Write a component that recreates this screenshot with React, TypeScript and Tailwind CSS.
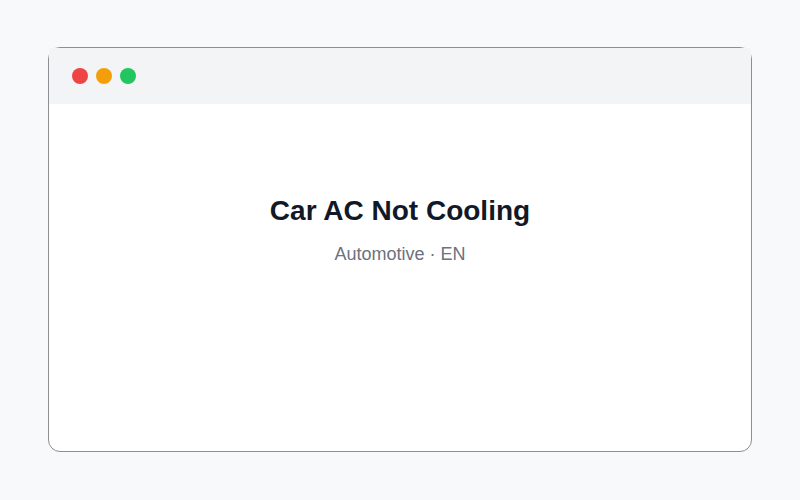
export default function App() {
    return (
        <div className="min-h-screen w-full bg-[#f8f9fb] px-12 pt-[47px] font-['Liberation_Sans',Arial,sans-serif]">
            <div className="flex h-[405px] flex-col rounded-xl border border-[#8e8e93] bg-white">
                <div className="flex h-14 items-center gap-2 bg-[#f3f4f6] px-[23px]">
                    <span className="h-4 w-4 rounded-full bg-[#ef4444]" />
                    <span className="h-4 w-4 rounded-full bg-[#f59e0b]" />
                    <span className="h-4 w-4 rounded-full bg-[#22c55e]" />
                </div>
                <div className="flex flex-col items-center pt-[89px]">
                    <h1 className="text-[28px] font-bold leading-9 text-[#111827]">Car AC Not Cooling</h1>
                    <p className="mt-[11px] text-lg leading-7 text-[#6b7280]">Automotive · EN</p>
                </div>
            </div>
        </div>
    );
}
